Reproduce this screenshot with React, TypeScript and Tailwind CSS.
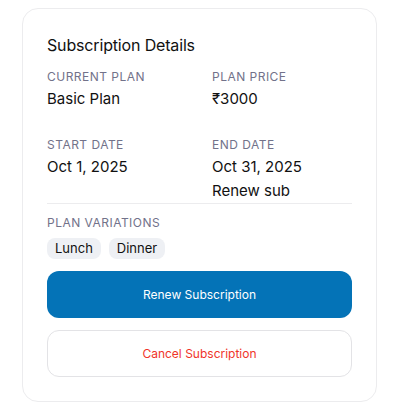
import React from "react";

/* ---------- Types ---------- */
interface FieldProps {
  label: string;
  children: React.ReactNode;
}

/* ---------- Field ---------- */
const Field = ({ label, children }: FieldProps) => (
  <div className="flex flex-col">
    <span className="text-[12px] leading-4 uppercase tracking-[0.04em] text-[#72728a]">
      {label}
    </span>
    <div className="mt-[2px] flex flex-col text-[15px] leading-6 text-[#111] proportional-nums">
      {children}
    </div>
  </div>
);

/* ---------- Chip ---------- */
const Chip = ({ text }: { text: string }) => (
  <span className="rounded-lg bg-[#eef0f4] px-2 py-[2px] text-[13px] leading-[17px] text-[#111]">
    {text}
  </span>
);

export default function App() {
  const variations = ["Lunch", "Dinner"];

  return (
    <div className="min-h-[410px] bg-white pt-2 font-[family-name:Inter,'Noto_Sans',sans-serif]">
      <div className="ml-[22px] w-[355px] rounded-2xl border border-[#ececee] bg-white p-6">
        <h2 className="text-[16px] leading-6 tracking-[-0.01em] text-[#111]">
          Subscription Details
        </h2>

        <div className="mt-3 grid grid-cols-2 gap-x-[25px] gap-y-[26px]">
          <Field label="Current Plan">
            <span>Basic Plan</span>
          </Field>
          <Field label="Plan Price">
            <span>₹3000</span>
          </Field>
          <Field label="Start Date">
            <span>Oct 1, 2025</span>
          </Field>
          <Field label="End Date">
            <span>Oct 31, 2025</span>
            <span>Renew sub</span>
          </Field>
        </div>

        <div className="border-t border-[#ececee] pt-[11px]">
          <p className="text-[12px] leading-4 uppercase tracking-[0.04em] text-[#72728a]">
            Plan Variations
          </p>
          <div className="mt-[7px] flex gap-2">
            {variations.map((v) => (
              <Chip key={v} text={v} />
            ))}
          </div>
        </div>

        <div className="mt-3 flex flex-col gap-3">
          <button
            type="button"
            className="h-[47px] rounded-xl bg-[#0473b7] text-[12px] text-white"
          >
            Renew Subscription
          </button>
          <button
            type="button"
            className="h-[47px] rounded-xl border border-[#e3e3e6] bg-white text-[12px] text-[#f0342a]"
          >
            Cancel Subscription
          </button>
        </div>
      </div>
    </div>
  );
}
